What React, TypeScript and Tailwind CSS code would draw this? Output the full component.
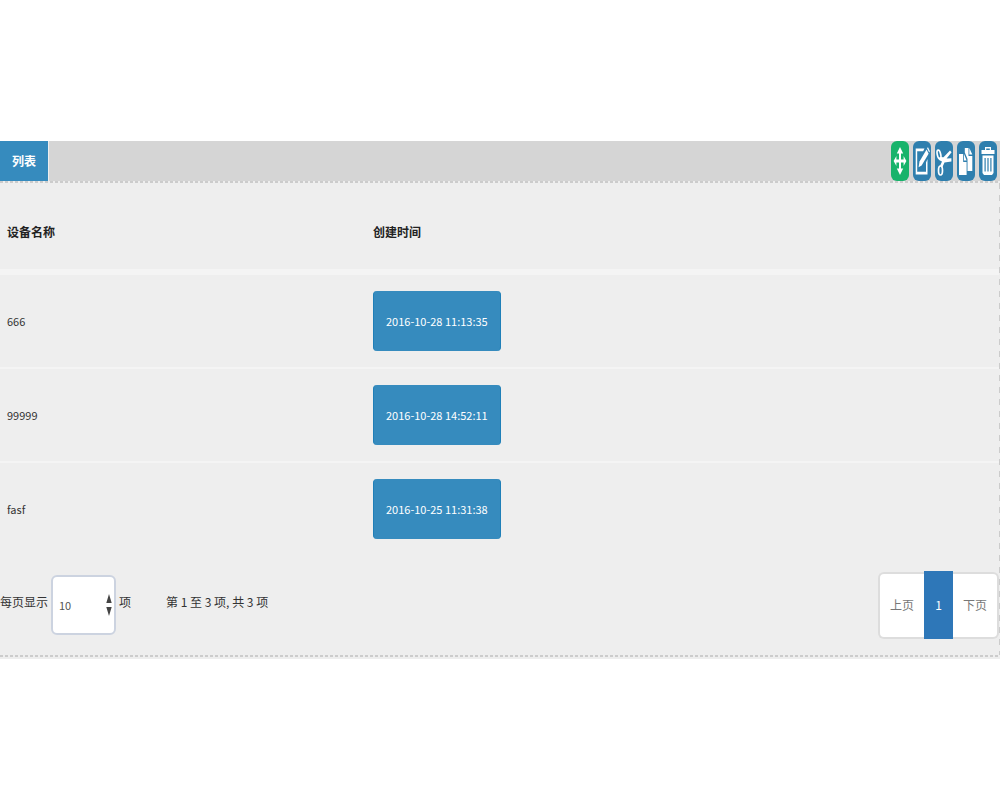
import type { ReactNode } from "react";

const rows = [
  { name: "666", time: "2016-10-28 11:13:35" },
  { name: "99999", time: "2016-10-28 14:52:11" },
  { name: "fasf", time: "2016-10-25 11:31:38" },
];

const tools: { label: string; color: string; icon: ReactNode }[] = [
  {
    label: "移动",
    color: "bg-[#18b36b]",
    icon: <path d="M9 6l3.200 6.500H10V18.500h2.600V15L15.400 20l-2.800 5v-3.500H10V27.500h2.200L9 34l-3.200-6.500H8v-6H5.400V25L2.600 20l2.800-5v3.500H8V12.500H5.800z" />,
  },
  {
    label: "编辑",
    color: "bg-[#2f7fae]",
    icon: (
      <>
        <path d="M11.500 7.500H2.700v26h11.800V18l-1.500 3.500V30.800H4.200V10.200h6z" />
        <path d="M13.600 8.500l2 4.300-7 11.700-3 1.800.9-5.800z" />
        <path d="M14.200 7.400l.7-1.400 2 4.200-.7 1.400z" />
      </>
    ),
  },
  {
    label: "剪切",
    color: "bg-[#2f7fae]",
    icon: (
      <>
        <g fill="none" stroke="currentColor" strokeWidth="1.700">
          <ellipse cx="4" cy="13.500" rx="1.700" ry="4.500" transform="rotate(-12 4 13.500)" />
          <ellipse cx="5.500" cy="29.500" rx="2" ry="4.500" />
        </g>
        <path d="M4.500 16l4 .3L15 9.500l1.600 1.800-5 6.200 4.800-.3v3.300L9.500 21.500 7 27 5.200 24.500 7 20.500l-3-1.500z" />
      </>
    ),
  },
  {
    label: "复制",
    color: "bg-[#2f7fae]",
    icon: (
      <>
        <path d="M2 13h4.200v8h3.400v13H2z" />
        <path d="M7 13l2.600 6.500H7z" />
        <path d="M7.800 7h3.700v8h3.800v15h-4.800V18L7.800 11.500z" />
        <path d="M12.300 7l3 6.500h-3z" />
      </>
    ),
  },
  {
    label: "删除",
    color: "bg-[#2f7fae]",
    icon: (
      <path
        fillRule="evenodd"
        d="M6 6h6v3H15.500v4H2.500V9H6zM7.200 7.500V9h3.600V7.500zM3.500 14.500h11V32l-1.500 2H5l-1.500-2zM5.500 17v13.500h1.200V17zM8.400 17v13.500h1.200V17zM11.300 17v13.500h1.200V17z"
      />
    ),
  },
];

export default function App() {
  return (
    <main className="bg-white py-[141px] font-['Noto_Sans_CJK_SC',sans-serif] text-xs text-[#333]">
      <section className="bg-[#eee] pb-0.5">
        <header className="flex h-10 items-stretch justify-between bg-[#d5d5d5]">
          <h1 className="flex items-center border-r border-[#eee] bg-[#368bbe] px-3 text-xs font-bold text-white">列表</h1>
          <div className="flex gap-1 pr-[3px]">
            {tools.map(({ label, icon, color }) => (
              <button key={label} aria-label={label} className={"w-[18px] rounded-md text-white " + color}>
                <svg viewBox="0 0 18 40" className="h-10 w-[18px]" fill="currentColor" aria-hidden="true">
                  {icon}
                </svg>
              </button>
            ))}
          </div>
        </header>
        <div className="h-0.5 bg-[repeating-linear-gradient(90deg,#ccc_0_3px,#eee_3px_5px)]" />
        <div className="flex">
          <div className="min-w-0 flex-1">
            <table className="w-full table-fixed border-separate border-spacing-0 text-left">
              <thead>
                <tr>
                  <th className="h-[92px] w-[366px] border-b-[6px] border-[#f4f4f4] pt-3 pl-[7px] font-bold text-[#222]">设备名称</th>
                  <th className="border-b-[6px] border-[#f4f4f4] pt-3 pl-[7px] font-bold text-[#222]">创建时间</th>
                </tr>
              </thead>
              <tbody className="text-[11px]">
                {rows.map((r) => (
                  <tr key={r.time} className="group">
                    <td className="h-[94px] border-b-2 border-[#f4f4f4] pl-[7px] group-last:border-[#eee]">{r.name}</td>
                    <td className="border-b-2 border-[#f4f4f4] pl-[7px] group-last:border-[#eee]">
                      <button className="block h-[60px] rounded border-x border-[#1f7fb8] bg-[#368bbe] px-3 text-white">{r.time}</button>
                    </td>
                  </tr>
                ))}
              </tbody>
            </table>
            <footer className="flex items-start justify-between pt-3.5 pb-4">
              <div className="flex items-center gap-[3px] pt-1">
                <label htmlFor="page-size" className="pb-1.5">每页显示</label>
                <div className="relative">
                  <select
                    id="page-size"
                    defaultValue="10"
                    className="block h-[60px] w-[65px] appearance-none rounded-md border-2 border-[#ccd3e0] bg-white pl-1.5 text-[11px] text-[#555]"
                  >
                    <option>10</option>
                    <option>25</option>
                    <option>50</option>
                  </select>
                  <svg viewBox="0 0 6 22" className="pointer-events-none absolute top-[19px] right-1 h-[22px] w-1.5" fill="#444" aria-hidden="true">
                    <path d="M3 0l2.700 9H.3zM3 22l2.700-9H.3z" />
                  </svg>
                </div>
                <span className="pb-1.5">项</span>
                <p className="ml-8 pb-1.5">第 1 至 3 项, 共 3 项</p>
              </div>
              <nav aria-label="分页" className="flex items-center text-[#777]">
                <button className="h-[67px] rounded-l-md border-2 border-r-0 border-[#ddd] bg-white px-2.5">上页</button>
                <button aria-current="page" className="h-[68px] w-[29px] bg-[#2e77b8] text-white">1</button>
                <button className="h-[67px] rounded-r-md border-2 border-l-0 border-[#ddd] bg-white px-2.5">下页</button>
              </nav>
            </footer>
          </div>
          <div className="w-px bg-[repeating-linear-gradient(180deg,#ccc_0_6px,#eee_6px_12px)]" />
        </div>
        <div className="h-0.5 bg-[repeating-linear-gradient(90deg,#ccc_0_3px,#eee_3px_5px)]" />
      </section>
    </main>
  );
}
